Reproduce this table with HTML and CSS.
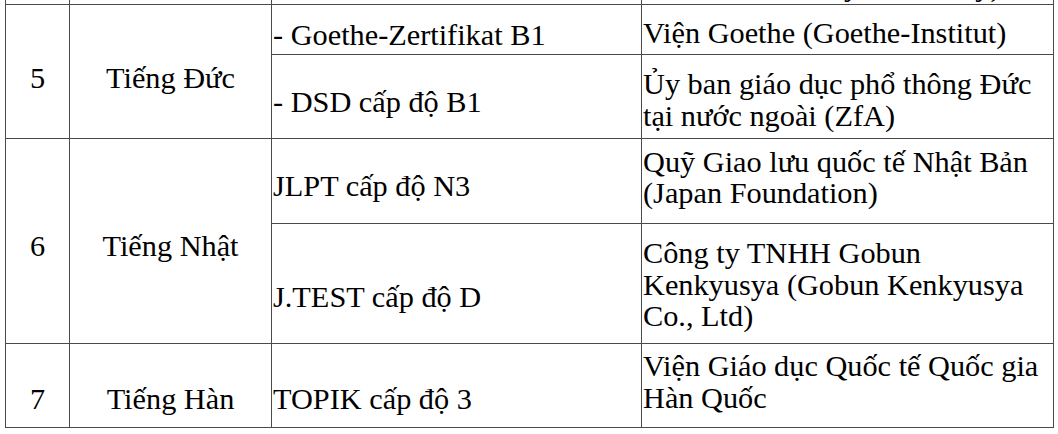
FILE: index.html
```html
<!DOCTYPE html>
<html lang="vi">
<head>
<meta charset="utf-8">
<title>Chứng chỉ ngoại ngữ</title>
<link rel="stylesheet" href="styles.css">
</head>
<body>
<div class="sheet">
  <div class="cell center"></div>
  <div class="cell center"></div>
  <div class="cell"></div>
  <div class="cell org prev">Văn phòng Hán ngữ (The<br>Hanban Academy of Society)</div>

  <div class="cell center span2 r5">5</div>
  <div class="cell center span2 r5">Tiếng Đức</div>
  <div class="cell">- Goethe-Zertifikat B1</div>
  <div class="cell org">Viện Goethe (Goethe-Institut)</div>
  <div class="cell">- DSD cấp độ B1</div>
  <div class="cell org">Ủy ban giáo dục phổ thông Đức tại nước ngoài (ZfA)</div>

  <div class="cell center span2">6</div>
  <div class="cell center span2">Tiếng Nhật</div>
  <div class="cell">JLPT cấp độ N3</div>
  <div class="cell org high">Quỹ Giao lưu quốc tế Nhật Bản (Japan Foundation)</div>
  <div class="cell low">J.TEST cấp độ D</div>
  <div class="cell org mid">Công ty TNHH Gobun Kenkyusya (Gobun Kenkyusya Co., Ltd)</div>

  <div class="cell center low">7</div>
  <div class="cell center low">Tiếng Hàn</div>
  <div class="cell low">TOPIK cấp độ 3</div>
  <div class="cell org high">Viện Giáo dục Quốc tế Quốc gia Hàn Quốc</div>
</div>
</body>
</html>
```

FILE: styles.css
```css
html, body {
  margin: 0;
  padding: 0;
  background: #ffffff;
  overflow: hidden;
}

.sheet {
  display: grid;
  grid-template-columns: 63px 201px 369px 411px;
  grid-template-rows: 77px 49px 83px 84px 119px 83px;
  gap: 1px;
  width: max-content;
  margin: -74px 0 0 5px;
  background: #4a4a4a;
  border: 1px solid #4a4a4a;
  font-family: "Liberation Serif", "Times New Roman", serif;
  font-size: 30.3px;
  line-height: 31.5px;
  color: #000;
}

.cell {
  background: #ffffff;
  display: flex;
  align-items: center;
  padding: 12px 0 0 1px;
}

.center {
  justify-content: center;
  text-align: center;
  padding-left: 0;
}

.span2 {
  grid-row: span 2;
}

.r5 {
  padding-top: 15px;
}

.low {
  padding-top: 29px;
}

.org {
  padding-top: 8px;
}

.org.mid {
  padding-top: 4px;
}

.org.high {
  padding-top: 0;
  padding-bottom: 6px;
}

.org.prev {
  align-items: flex-end;
  padding-top: 0;
  padding-bottom: 2px;
}
```
